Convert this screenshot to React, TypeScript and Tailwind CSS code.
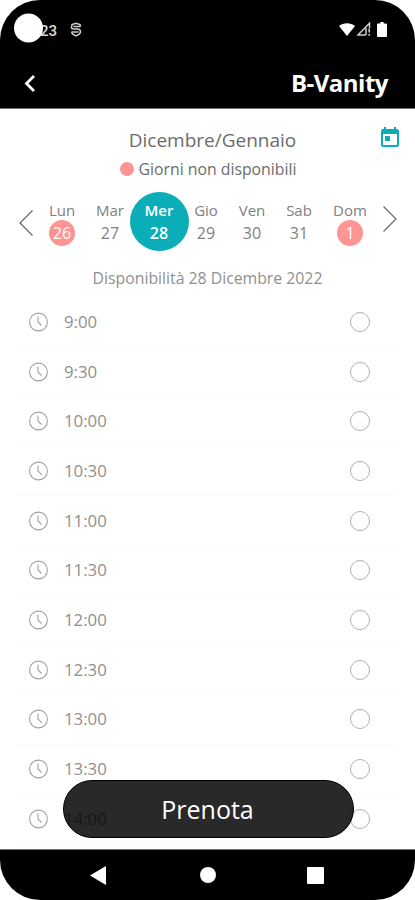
import clsx from 'clsx';

type Day = {
    name: string;
    date: number;
    width: string;
    state?: 'selected' | 'unavailable';
};

const days: Day[] = [
    { name: 'Lun', date: 26, width: 'w-12', state: 'unavailable' },
    { name: 'Mar', date: 27, width: 'w-12' },
    { name: 'Mer', date: 28, width: 'w-[50px]', state: 'selected' },
    { name: 'Gio', date: 29, width: 'w-11' },
    { name: 'Ven', date: 30, width: 'w-12' },
    { name: 'Sab', date: 31, width: 'w-[46px]' },
    { name: 'Dom', date: 1, width: 'w-14', state: 'unavailable' },
];

const slots = ['9:00', '9:30', '10:00', '10:30', '11:00', '11:30', '12:00', '12:30', '13:00', '13:30', '14:00'];

function StatusBar() {
    return (
        <div className="flex h-[58px] shrink-0 items-center justify-between pl-3.5 pr-7">
            <div className="flex items-center">
                <div className="relative z-10 h-[29px] w-[29px] -translate-y-[1.5px] rounded-full bg-white" />
                <span className="-ml-[3px] mt-1 font-['Roboto'] text-[15px] font-medium leading-none text-white/85">23</span>
                <svg className="ml-[13px] mt-px h-[15px] w-3" viewBox="0 0 12 15" fill="none" stroke="#ccc" strokeWidth="1.5">
                    <path d="M10.5 4.5 10 2.5 6 1.2 2 2.500 1.500 5.500Q1.500 7 4 7H8Q10.500 7.300 10.500 10L9.500 12 6 13.800 2.500 12 1.500 10" />
                    <path d="M3.5 4.5H10.5M1.5 10H8.5" />
                </svg>
            </div>
            <div className="flex items-center">
                <svg className="h-[13px] w-4" viewBox="0 0 16 13" fill="white">
                    <path d="M0 3C4.5-.8 11.5-.8 16 3L8 13Z" />
                </svg>
                <svg className="ml-px h-[14px] w-[15px]" viewBox="0 0 15 14" fill="none" stroke="#ccc" strokeWidth="1.5">
                    <path d="M10 13H2L13.5 1.2V6" />
                    <path d="M10 6V13" />
                    <path d="M13.2 6.5V10.5M13.2 12V13.7" strokeWidth="1.6" />
                </svg>
                <svg className="ml-[6px] h-[15px] w-[10px]" viewBox="0 0 9 15" preserveAspectRatio="none" fill="white">
                    <path d="M3 0H6V1.5H8Q9 1.5 9 2.5V14Q9 15 8 15H1Q0 15 0 14V2.5Q0 1.5 1 1.5H3Z" />
                </svg>
            </div>
        </div>
    );
}

function Header() {
    return (
        <header className="flex h-[50px] shrink-0 items-center justify-between pl-6 pr-[27px]">
            <svg className="h-[17px] w-3" viewBox="0 0 12 17" fill="none" stroke="white" strokeWidth="2.8">
                <path d="M10 1 2.5 8.5 10 16" />
            </svg>
            <h1 className="text-[24px] font-bold leading-none tracking-[-0.5px] text-white">B-Vanity</h1>
        </header>
    );
}

function Clock() {
    return (
        <svg className="h-5 w-5" viewBox="0 0 20 20" fill="none" stroke="#a0a0a0" strokeWidth="1.1">
            <circle cx="9.5" cy="10" r="8.9" />
            <path d="M9 4.5V10L12.5 13.5" />
        </svg>
    );
}

function DayCell({ day }: { day: Day }) {
    const selected = day.state === 'selected';

    return (
        <button className={clsx('flex h-[59px] shrink-0 justify-center', day.width)}>
            <span
                className={clsx(
                    'flex h-[59px] w-[59px] shrink-0 flex-col items-center rounded-full pt-2 text-[15px]',
                    selected ? 'bg-[#0badb9] font-semibold text-white' : 'text-[#808080]'
                )}
            >
                <span className="h-5 leading-[21px]">{day.name}</span>
                <span
                    className={clsx(
                        'flex h-[26px] w-[26px] items-center justify-center rounded-full text-[16px] leading-none',
                        day.state === 'unavailable' && 'bg-[#fe9494] text-white'
                    )}
                >
                    {day.date}
                </span>
            </span>
        </button>
    );
}

export default function App() {
    return (
        <div className="h-[900px] w-[415px] bg-white font-['Open_Sans',sans-serif]">
            <div className="flex h-full flex-col overflow-hidden rounded-[40px] bg-black">
                <StatusBar />
                <Header />

                <main className="relative h-[742px] shrink-0 overflow-hidden border-y border-[#777] bg-white">
                    {/* Month and legend */}
                    <div className="grid h-[83px] grid-cols-[44px_1fr_44px] pt-[18px]">
                        <div />
                        <div className="flex flex-col items-center pl-[10px]">
                            <h2 className="mt-px text-[19px] leading-6 text-[#6c6c6c]">Dicembre/Gennaio</h2>
                            <p className="mr-[9px] mt-[7px] flex items-center gap-[5px] text-[15.8px] leading-5 text-[#6c6c6c]">
                                <span className="h-3.5 w-3.5 rounded-full bg-[#fe9494]" />
                                Giorni non disponibili
                            </p>
                        </div>
                        <svg className="ml-[9.5px] h-5 w-[18px]" viewBox="0 0 18 20" fill="#0badb9">
                            <path fillRule="evenodd" d="M3 0H5V2H13V0H15V2H16Q18 2 18 4V18Q18 20 16 20H2Q0 20 0 18V4Q0 2 2 2H3ZM2 7V18H16V7Z" />
                            <rect x="4" y="9" width="5" height="5" />
                        </svg>
                    </div>

                    {/* Week */}
                    <div className="flex h-[59px] items-start pl-[19px]">
                        <svg className="mt-[17px] h-7 w-[19px]" viewBox="0 0 19 28" fill="none" stroke="#666" strokeWidth="1.2">
                            <path d="M13.5 1.5 1 14 13.5 26.5" />
                        </svg>
                        <div className="flex">
                            {days.map((day) => (
                                <DayCell key={day.name} day={day} />
                            ))}
                        </div>
                        <svg className="mt-[13px] h-7 w-[19px]" viewBox="0 0 19 28" fill="none" stroke="#666" strokeWidth="1.2">
                            <path d="M5.5 1.5 18 14 5.5 26.5" />
                        </svg>
                    </div>

                    <p className="mt-4 h-[30.5px] text-center text-[15.8px] leading-[22px] text-[#909090]">
                        Disponibilità 28 Dicembre 2022
                    </p>

                    {/* Time slots */}
                    <ul className="px-4">
                        {slots.map((slot) => (
                            <li key={slot} className="flex h-[49.7px] items-center border-b border-[#fafafa] pl-[13px] pr-[29px]">
                                <Clock />
                                <span className="ml-[15px] flex-1 pt-px text-[16.8px] leading-none text-[#909090]">{slot}</span>
                                <span className="h-5 w-5 rounded-full border border-[#b0b0b0]" />
                            </li>
                        ))}
                    </ul>

                    <button className="absolute bottom-[11px] left-[63px] h-[58px] w-[291px] rounded-full border border-black bg-black/84 pr-0.5 text-[25px] leading-none text-white">
                        Prenota
                    </button>
                </main>

                {/* Android navigation */}
                <nav className="flex h-[50px] shrink-0 items-center justify-between pl-[90px] pr-[91px]">
                    <svg className="h-[19px] w-4" viewBox="0 0 16 19" fill="white">
                        <path d="M16 0V19L0 9.5Z" />
                    </svg>
                    <span className="ml-[2px] h-4 w-4 rounded-full bg-white" />
                    <span className="h-[17px] w-[17px] rounded-[1px] bg-white" />
                </nav>
            </div>
        </div>
    );
}
